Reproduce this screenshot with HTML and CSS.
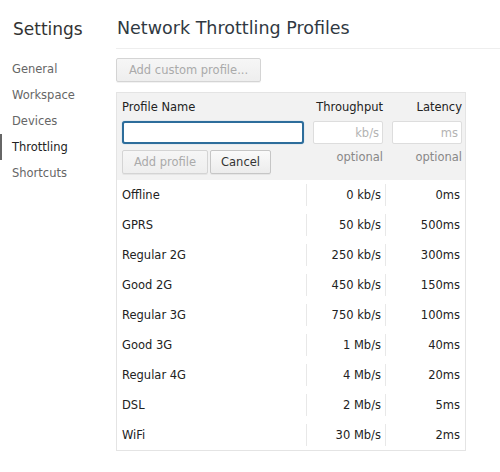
FILE: index.html
```html
<!DOCTYPE html>
<html>
<head>
<meta charset="utf-8">
<link rel="stylesheet" href="styles.css">
</head>
<body>
<div class="app">
  <nav class="sidebar">
    <div class="side-title">Settings</div>
    <ul class="tabs">
      <li class="tab">General</li>
      <li class="tab">Workspace</li>
      <li class="tab">Devices</li>
      <li class="tab selected">Throttling</li>
      <li class="tab">Shortcuts</li>
    </ul>
  </nav>
  <main class="content">
    <h1 class="title">Network Throttling Profiles</h1>
    <div class="body">
      <button class="btn btn-disabled add-custom">Add custom profile...</button>
      <div class="list">
        <div class="editor">
          <div class="ed-grid">
            <div class="ed-label">Profile Name</div>
            <div class="ed-label right">Throughput</div>
            <div class="ed-label right">Latency</div>
            <input class="field field-focus" type="text">
            <input class="field right-field" type="text" placeholder="kb/s">
            <input class="field right-field" type="text" placeholder="ms">
            <div class="ed-buttons">
              <button class="btn btn-disabled">Add profile</button>
              <button class="btn">Cancel</button>
            </div>
            <div class="ed-hint">optional</div>
            <div class="ed-hint">optional</div>
          </div>
        </div>
        <div class="row"><div class="c-name">Offline</div><div class="c-tp">0 kb/s</div><div class="c-lat">0ms</div></div>
        <div class="row"><div class="c-name">GPRS</div><div class="c-tp">50 kb/s</div><div class="c-lat">500ms</div></div>
        <div class="row"><div class="c-name">Regular 2G</div><div class="c-tp">250 kb/s</div><div class="c-lat">300ms</div></div>
        <div class="row"><div class="c-name">Good 2G</div><div class="c-tp">450 kb/s</div><div class="c-lat">150ms</div></div>
        <div class="row"><div class="c-name">Regular 3G</div><div class="c-tp">750 kb/s</div><div class="c-lat">100ms</div></div>
        <div class="row"><div class="c-name">Good 3G</div><div class="c-tp">1 Mb/s</div><div class="c-lat">40ms</div></div>
        <div class="row"><div class="c-name">Regular 4G</div><div class="c-tp">4 Mb/s</div><div class="c-lat">20ms</div></div>
        <div class="row"><div class="c-name">DSL</div><div class="c-tp">2 Mb/s</div><div class="c-lat">5ms</div></div>
        <div class="row"><div class="c-name">WiFi</div><div class="c-tp">30 Mb/s</div><div class="c-lat">2ms</div></div>
      </div>
    </div>
  </main>
</div>
</body>
</html>
```

FILE: styles.css
```css
* { box-sizing: border-box; }
html, body { margin: 0; padding: 0; background: #fff; }
body {
  font-family: "DejaVu Sans", "Liberation Sans", sans-serif;
  font-size: 11.5px;
  color: #222;
  width: 500px;
  height: 472px;
  overflow: hidden;
}
.app { display: flex; }
.sidebar { width: 116px; flex: none; }
.side-title {
  font-size: 17px;
  color: #333;
  height: 48px;
  padding: 17px 0 0 13px;
  line-height: 24px;
}
.tabs { list-style: none; margin: 0; padding: 8px 0 0 0; }
.tab {
  height: 26px;
  line-height: 26px;
  padding-left: 10px;
  color: #666;
  border-left: 2px solid transparent;
}
.tab.selected { border-left-color: #666; color: #222; }

.content { flex: 1; min-width: 0; }
.title {
  margin: 0;
  font-weight: normal;
  font-size: 17.5px;
  color: #303942;
  height: 49px;
  padding: 16px 0 0 1px;
  line-height: 24px;
  border-bottom: 1px solid #eee;
}
.body { padding: 9px 0 0 0; width: 350px; }

.btn {
  font-family: inherit;
  font-size: 11.5px;
  height: 24px;
  padding: 0 10px;
  border: 1px solid #c6c6c6;
  border-radius: 2px;
  background: linear-gradient(#fafafa, #ececec);
  color: #333;
  box-shadow: 0 1px 0 rgba(0,0,0,0.05);
}
.btn-disabled { color: #aaa; border-color: #d4d4d4; background: linear-gradient(#f6f6f6, #eeeeee); }
.add-custom { width: 145px; height: 24px; display: block; }

.list {
  margin-top: 10px;
  border: 1px solid #e4e4e4;
  width: 350px;
}
.editor {
  background: #f2f2f2;
  padding: 0 4px 0 5px;
}
.ed-grid {
  display: grid;
  grid-template-columns: 182px 70px 70px;
  column-gap: 9px;
  grid-template-rows: 28px 23px 36px;
}
.ed-label { color: #222; line-height: 17px; padding-top: 6px; }
.ed-label.right { text-align: right; }
.field {
  font-family: inherit;
  font-size: 11.5px;
  height: 23px;
  border: 1px solid #ddd;
  border-radius: 2px;
  background: #fff;
  padding: 0 3px;
  outline: none;
  width: 100%;
}
.right-field { text-align: right; }
.field::placeholder { color: #b3b3b3; }
.field-focus { border: 2px solid #2d6d9b; border-radius: 3px; box-shadow: 0 0 1px #6fa4cc; }
.ed-buttons { display: flex; gap: 2px; padding-top: 6px; }
.ed-buttons .btn:first-child { width: 86px; }
.ed-buttons .btn:last-child { width: 61px; }
.ed-hint { text-align: right; color: #888; padding-top: 6px; line-height: 15px; }

.row {
  display: flex;
  height: 30px;
  align-items: center;
}
.row > div { height: 22px; line-height: 22px; color: #222; }
.c-name { width: 189px; padding-left: 5px; }
.c-tp { width: 79px; text-align: right; padding-right: 4px; border-left: 1px solid #e8e8e8; }
.c-lat { flex: 1; text-align: right; padding-right: 5px; border-left: 1px solid #e8e8e8; }
```
